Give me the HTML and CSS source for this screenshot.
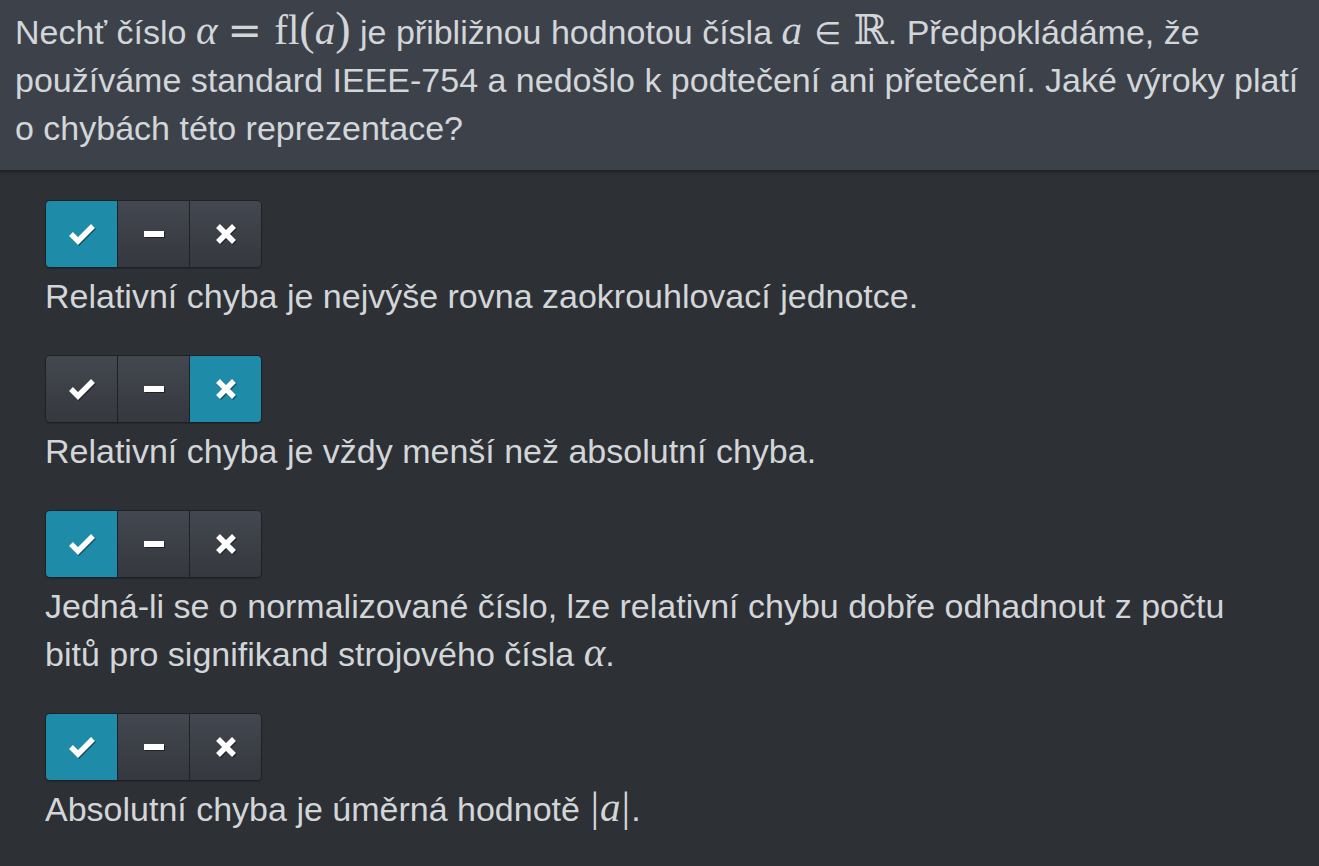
FILE: index.html
```html
<!DOCTYPE html>
<html lang="cs">
<head>
<meta charset="utf-8">
<link rel="stylesheet" href="styles.css">
</head>
<body>
<div class="question">
  <p class="q-text">Nechť číslo <span class="math"><i class="mi">α</i><span class="mo">=</span><span class="mr">fl</span><span class="mp">(</span><i class="mi">a</i><span class="mp">)</span></span> je přibližnou hodnotou čísla <span class="math"><i class="mi">a</i><span class="mo in">∈</span><span class="bb">ℝ</span></span>. Předpokládáme, že používáme standard IEEE-754 a nedošlo k podtečení ani přetečení. Jaké výroky platí o chybách této reprezentace?</p>
</div>
<div class="answers">
  <div class="item">
    <div class="btn-group">
      <button class="btn active"><svg viewBox="0 0 28 22" class="ic-check"><polyline points="3,11 10,18 25,3"/></svg></button>
      <button class="btn"><svg viewBox="0 0 20 8" class="ic-minus"><rect x="0" y="1" width="20" height="6"/></svg></button>
      <button class="btn"><svg viewBox="0 0 22 22" class="ic-x"><path d="M3 3 L19 19 M19 3 L3 19"/></svg></button>
    </div>
    <p class="a-text">Relativní chyba je nejvýše rovna zaokrouhlovací jednotce.</p>
  </div>
  <div class="item">
    <div class="btn-group">
      <button class="btn"><svg viewBox="0 0 28 22" class="ic-check"><polyline points="3,11 10,18 25,3"/></svg></button>
      <button class="btn"><svg viewBox="0 0 20 8" class="ic-minus"><rect x="0" y="1" width="20" height="6"/></svg></button>
      <button class="btn active"><svg viewBox="0 0 22 22" class="ic-x"><path d="M3 3 L19 19 M19 3 L3 19"/></svg></button>
    </div>
    <p class="a-text">Relativní chyba je vždy menší než absolutní chyba.</p>
  </div>
  <div class="item">
    <div class="btn-group">
      <button class="btn active"><svg viewBox="0 0 28 22" class="ic-check"><polyline points="3,11 10,18 25,3"/></svg></button>
      <button class="btn"><svg viewBox="0 0 20 8" class="ic-minus"><rect x="0" y="1" width="20" height="6"/></svg></button>
      <button class="btn"><svg viewBox="0 0 22 22" class="ic-x"><path d="M3 3 L19 19 M19 3 L3 19"/></svg></button>
    </div>
    <p class="a-text">Jedná-li se o normalizované číslo, lze relativní chybu dobře odhadnout z počtu bitů pro signifikand strojového čísla <span class="math"><i class="mi">α</i></span>.</p>
  </div>
  <div class="item">
    <div class="btn-group">
      <button class="btn active"><svg viewBox="0 0 28 22" class="ic-check"><polyline points="3,11 10,18 25,3"/></svg></button>
      <button class="btn"><svg viewBox="0 0 20 8" class="ic-minus"><rect x="0" y="1" width="20" height="6"/></svg></button>
      <button class="btn"><svg viewBox="0 0 22 22" class="ic-x"><path d="M3 3 L19 19 M19 3 L3 19"/></svg></button>
    </div>
    <p class="a-text">Absolutní chyba je úměrná hodnotě <span class="math"><span class="bar">|</span><i class="mi">a</i><span class="bar">|</span></span>.</p>
  </div>
</div>
</body>
</html>
```
FILE: styles.css
```css
html, body {
  margin: 0;
  padding: 0;
}
body {
  background: #2d3035;
  font-family: "Liberation Sans", Arial, sans-serif;
  font-size: 34px;
  color: #d3d6d9;
  width: 1319px;
  height: 866px;
  overflow: hidden;
}
.question {
  background: #3d424a;
  padding: 8px 15px 18px 15px;
  border-bottom: 1px solid #1e2125;
  box-shadow: 0 1px 3px rgba(0,0,0,0.35);
}
.q-text {
  margin: 0;
  line-height: 48px;
  max-width: 1290px;
}
.math {
  font-family: "Liberation Serif", "DejaVu Serif", serif;
  font-size: 1.21em;
  white-space: nowrap;
  line-height: 0;
}
.mi {
  font-family: "Liberation Serif", "DejaVu Serif", serif;
  font-style: italic;
}
.mo {
  font-family: "DejaVu Sans", sans-serif;
  font-size: 1em;
  padding: 0 0.2em 0 0.24em;
}
.mo.in {
  font-size: 0.75em;
  padding: 0 0.4em;
}
.mr {
  font-family: "Liberation Serif", serif;
  padding-left: 0.1em;
}
.mp {
  font-family: "Liberation Serif", serif;
  font-size: 1.12em;
}
.bb {
  font-family: "DejaVu Serif", serif;
  font-size: 1em;
}
.bar {
  font-family: "Liberation Serif", serif;
  font-size: 1.05em;
  padding: 0 1px;
}
.answers {
  padding: 29px 45px 0 45px;
}
.item {
  margin-bottom: 35px;
}
.btn-group {
  display: flex;
  width: fit-content;
  border-radius: 5px;
  border: 1px solid #1e2125;
  overflow: hidden;
  box-shadow: 0 1px 1px rgba(0,0,0,0.2);
}
.btn {
  width: 72px;
  height: 66px;
  margin: 0;
  padding: 0;
  border: none;
  border-left: 1px solid #1e2125;
  background: linear-gradient(#43474f, #35383e);
  display: flex;
  align-items: center;
  justify-content: center;
  cursor: pointer;
}
.btn:first-child {
  border-left: none;
  width: 71px;
}
.btn.active {
  background: #1e8ba8;
}
.btn svg {
  overflow: visible;
  filter: drop-shadow(1px 1px 0 rgba(0,0,0,0.45));
}
.ic-check {
  width: 28px;
  height: 22px;
}
.ic-check polyline {
  fill: none;
  stroke: #fff;
  stroke-width: 5.5;
  stroke-linejoin: miter;
  stroke-linecap: butt;
}
.ic-minus {
  width: 20px;
  height: 8px;
  fill: #fff;
}
.ic-x {
  width: 22px;
  height: 22px;
}
.ic-x path {
  stroke: #fff;
  stroke-width: 5.5;
  fill: none;
}
.a-text {
  margin: 4px 0 0 0;
  line-height: 48px;
}
```
